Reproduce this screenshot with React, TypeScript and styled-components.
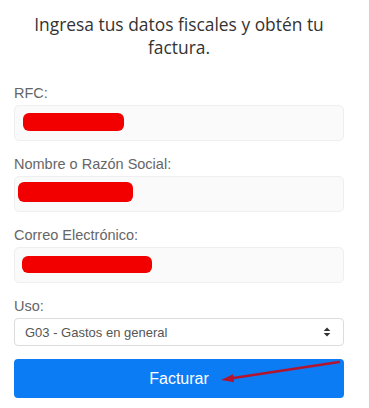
import React from "react";
import styled, { createGlobalStyle } from "styled-components";

const Global = createGlobalStyle`
  html, body { margin: 0; padding: 0; background: #ffffff; }
  body { width: 369px; height: 408px; overflow: hidden; }
`;

const Page = styled.div`
  width: 369px;
  box-sizing: border-box;
  padding: 13px 25px 0 14px;
  display: flex;
  flex-direction: column;
  font-family: "Liberation Sans", Arial, sans-serif;
`;

const Title = styled.h1`
  margin: 0 0 26px 0;
  font-family: "Open Sans", "Noto Sans", sans-serif;
  font-weight: 400;
  font-size: 17.4px;
  line-height: 23px;
  color: #333333;
  text-align: center;
`;

const Field = styled.div`
  display: flex;
  flex-direction: column;
  gap: 3px;
  margin-bottom: 15px;
`;

const Label = styled.label`
  font-size: 14.5px;
  line-height: 17px;
  color: #666666;
`;

const InputBox = styled.div`
  height: 36px;
  box-sizing: border-box;
  background: #fafafa;
  border: 1px solid #efefef;
  border-radius: 5px;
  display: flex;
  align-items: flex-start;
`;

const Redaction = styled.span<{ $left: number; $top: number; $w: number; $h: number }>`
  display: block;
  margin-left: ${(p) => p.$left}px;
  margin-top: ${(p) => p.$top}px;
  width: ${(p) => p.$w}px;
  height: ${(p) => p.$h}px;
  background: #f20000;
  border-radius: 6px;
`;

const SelectBox = styled.div`
  height: 28px;
  box-sizing: border-box;
  background: #ffffff;
  border: 1px solid #dcdcdc;
  border-radius: 4px;
  display: flex;
  align-items: center;
  justify-content: space-between;
  padding: 0 12px 0 10px;
  font-size: 13px;
  color: #555555;
`;

const Button = styled.button`
  position: relative;
  margin-top: -2px;
  height: 39px;
  width: 100%;
  border: none;
  border-radius: 4px;
  background: #0b7cf4;
  color: #ffffff;
  font-family: "Liberation Sans", Arial, sans-serif;
  font-size: 16px;
  padding: 0;
  cursor: pointer;
`;

const ArrowOverlay = styled.svg`
  position: absolute;
  left: 0;
  top: 0;
  pointer-events: none;
`;

const SortIcon = () => (
  <svg width="8" height="10" viewBox="0 0 8 10">
    <path d="M4 0.5 L7.3 4 L0.7 4 Z" fill="#333" />
    <path d="M4 9.5 L7.3 6 L0.7 6 Z" fill="#333" />
  </svg>
);

export default function App() {
  return (
    <>
      <Global />
      <Page>
        <Title>Ingresa tus datos fiscales y obtén tu factura.</Title>
        <Field>
          <Label>RFC:</Label>
          <InputBox>
            <Redaction $left={8} $top={7} $w={101} $h={18} />
          </InputBox>
        </Field>
        <Field>
          <Label>Nombre o Razón Social:</Label>
          <InputBox>
            <Redaction $left={3} $top={5} $w={115} $h={20} />
          </InputBox>
        </Field>
        <Field>
          <Label>Correo Electrónico:</Label>
          <InputBox>
            <Redaction $left={7} $top={8} $w={130} $h={17} />
          </InputBox>
        </Field>
        <Field>
          <Label>Uso:</Label>
          <SelectBox>
            <span>G03 - Gastos en general</span>
            <SortIcon />
          </SelectBox>
        </Field>
        <Button>
          Facturar
          <ArrowOverlay width="330" height="39" viewBox="0 0 330 39">
            <line x1="325" y1="3" x2="216" y2="19.5" stroke="#b3142e" strokeWidth="2.4" strokeLinecap="round" />
            <path d="M207 21 L219 15.2 L220.2 23.2 Z" fill="#b3142e" />
          </ArrowOverlay>
        </Button>
      </Page>
    </>
  );
}
